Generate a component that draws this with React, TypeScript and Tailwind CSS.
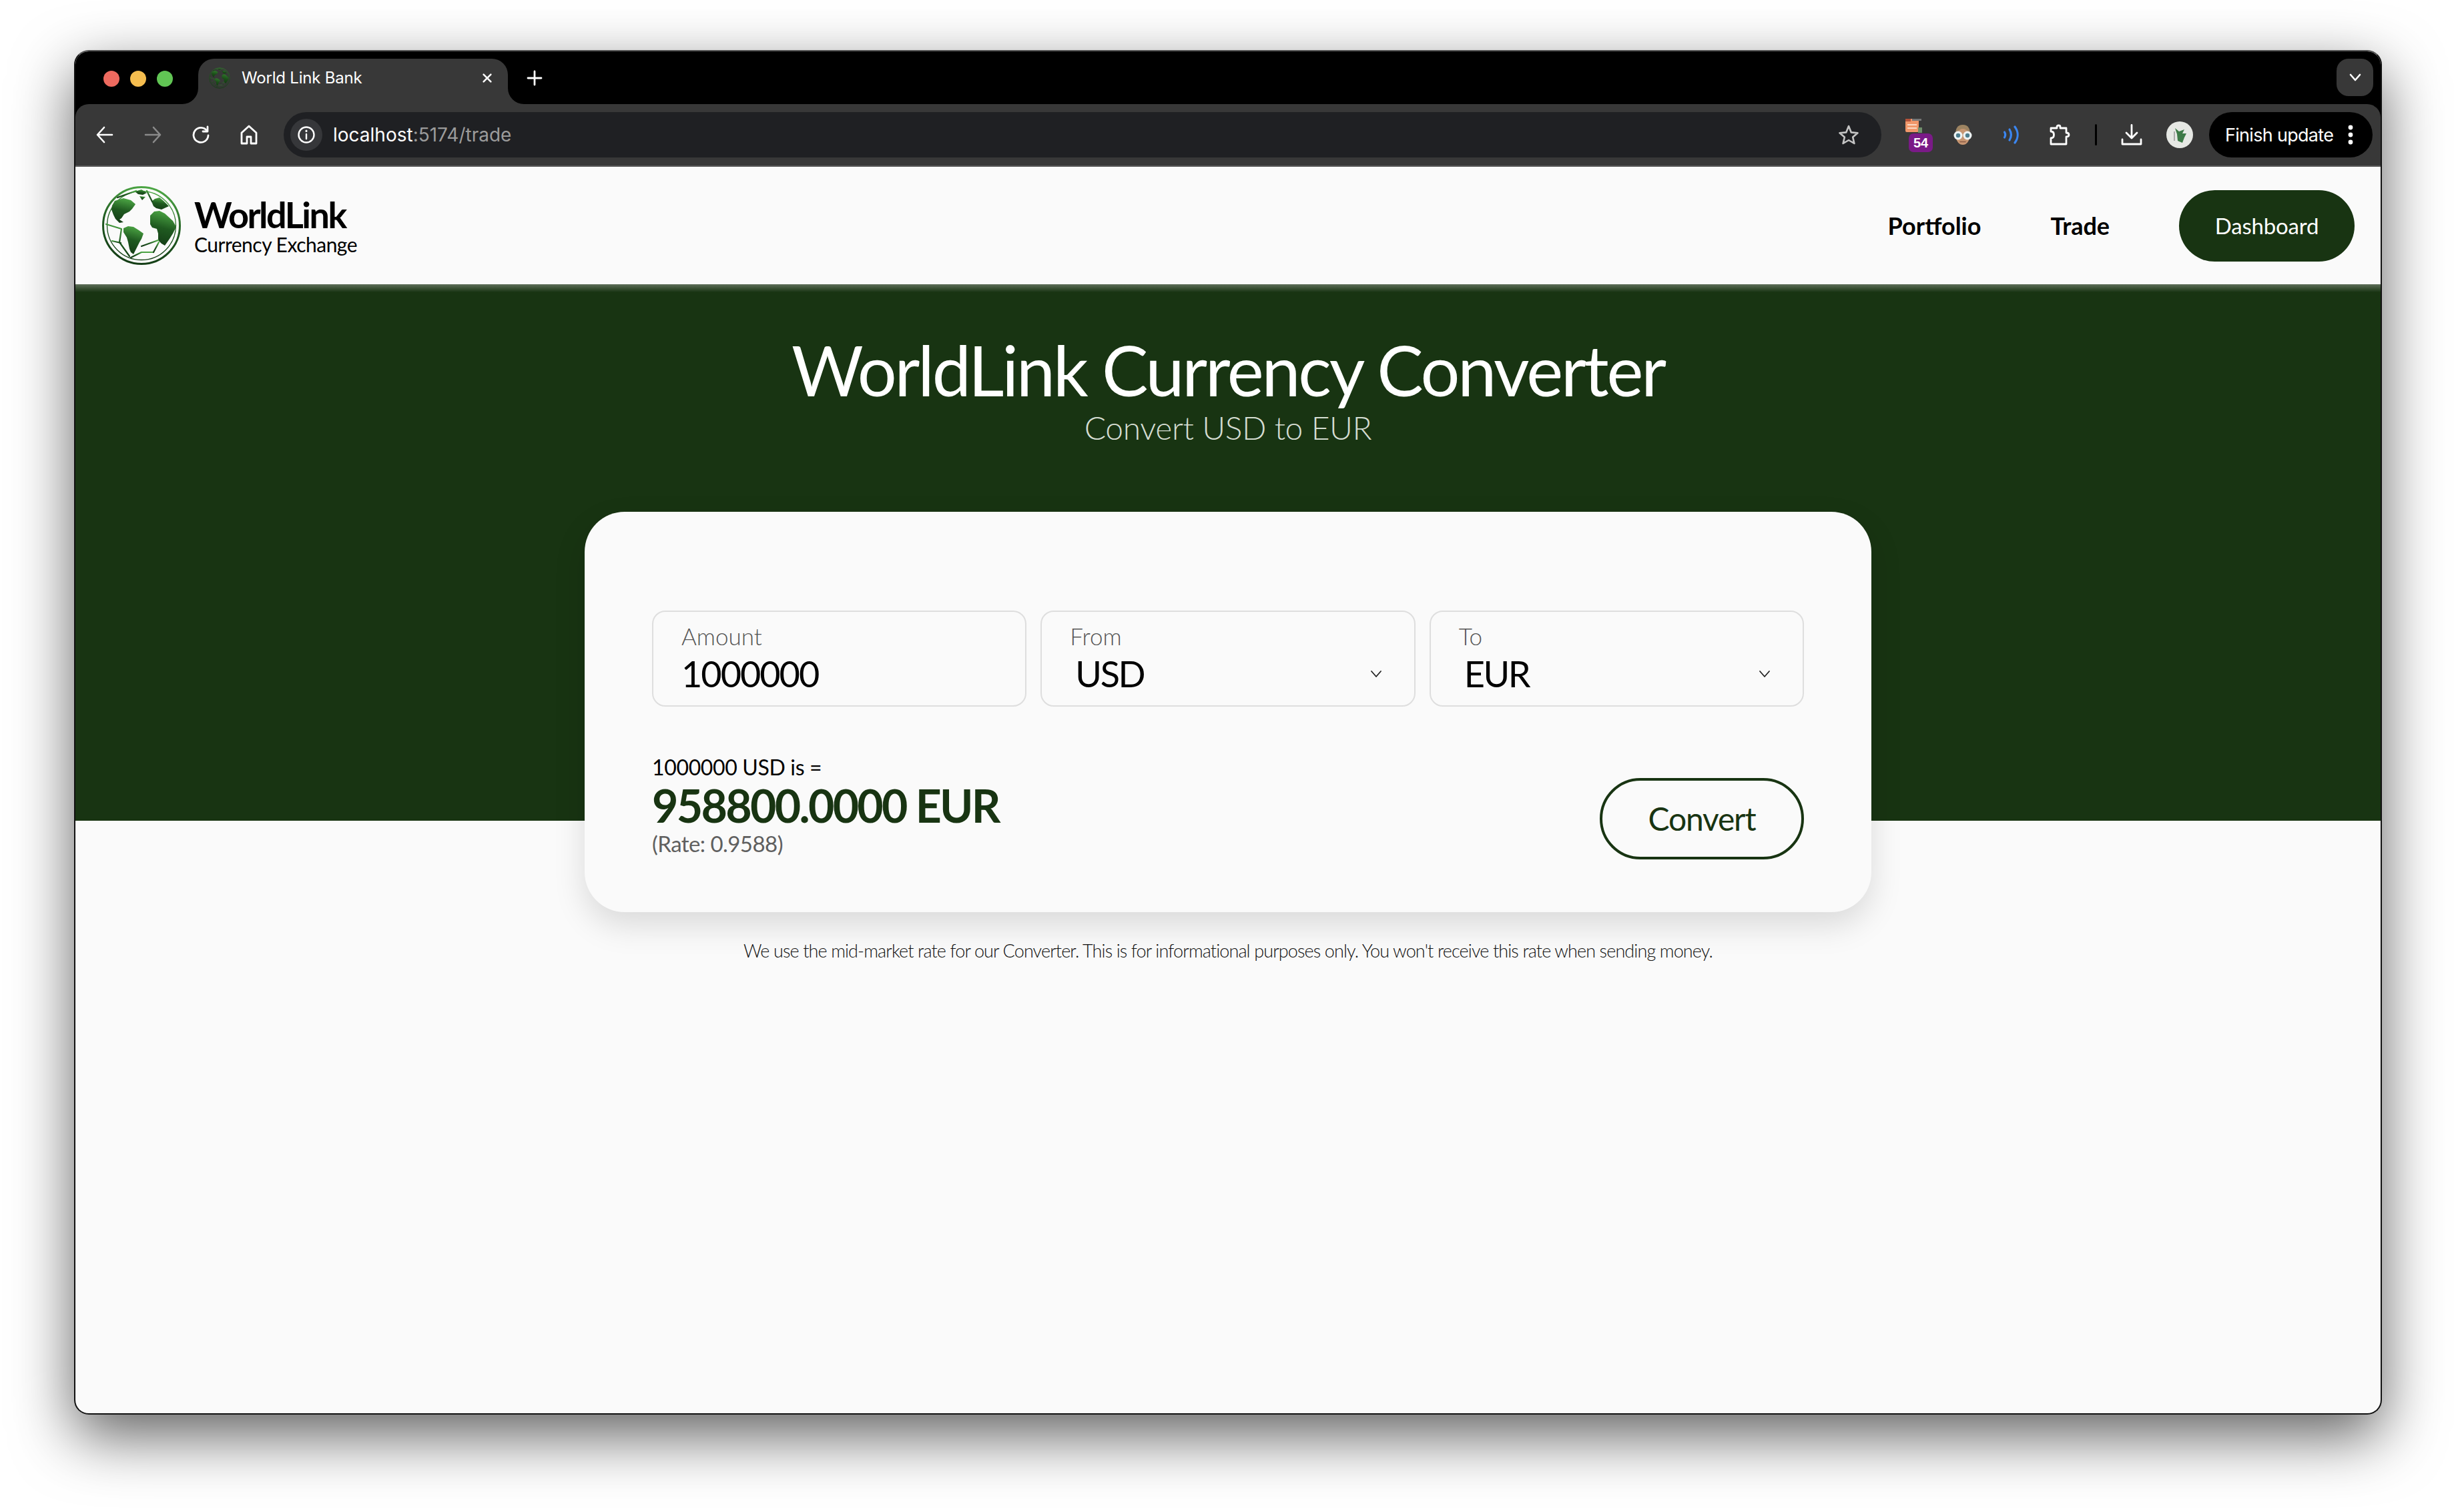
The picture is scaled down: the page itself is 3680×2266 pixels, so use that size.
import React from "react";

function Globe({ size, dim = false }: { size: number; dim?: boolean }) {
  const id = dim ? "gd" : "gl";
  return (
    <svg width={size} height={size} viewBox="0 0 120 120" fill="none">
      <defs>
        <linearGradient id={id} x1="0.6" y1="0" x2="0.4" y2="1">
          <stop offset="0" stopColor={dim ? "#2f7a2b" : "#4da745"} />
          <stop offset="0.5" stopColor={dim ? "#1c4f1a" : "#1f5a20"} />
          <stop offset="1" stopColor={dim ? "#123a12" : "#143d16"} />
        </linearGradient>
      </defs>
      <circle cx="60" cy="60" r="57.5" stroke={`url(#${id})`} strokeWidth="3" />
      <circle cx="60" cy="60" r="51.5" stroke={`url(#${id})`} strokeWidth="1.3" />
      <g fill={`url(#${id})`}>
        <path d="M20 23 L33 19 L44 22 L51 28 L46 35 L42 39 L34 43 L30 49 L27 51 L33 55 L27 56 L21 50 L18 44 L15 36 L16 30 Z" />
        <path d="M33 64 L40 61 L48 62 L56 67 L63 72 L60 80 L57 85 L52 95 L48 103 L44 100 L42 95 L40 85 L38 78 L33 70 Z" />
        <path d="M73 45 L79 39 L87 38 L95 42 L107 53 L112 62 L107 72 L102 80 L95 90 L90 87 L85 82 L85 72 L83 65 L76 63 L73 58 Z" />
        <path d="M75 24 L80 20 L87 18 L93 23 L101 31 L90 36 L82 34 L78 31 Z" />
        <path d="M50 9 L60 6 L68 11 L62 14 L55 13 Z" />
        <path d="M57 16 L66 17 L61 22 Z" />
      </g>
      <g stroke={`url(#${id})`} strokeWidth="2.2" strokeLinecap="round" strokeLinejoin="round">
        <path d="M58 26 V61" />
        <path d="M42 42 H72" />
        <path d="M58 90 V116" />
        <path d="M60 91 L85 82" />
        <path d="M44 108 L60 100 L78 100" />
        <path d="M7 58 L30 65 L27 85 L42 106" />
        <path d="M16 83 L29 86" />
        <path d="M78 100 L86 85" />
        <path d="M24 18 L52 8" />
        <path d="M68 8 L76 24" />
      </g>
    </svg>
  );
}

function Corner({ side }: { side: "l" | "r" }) {
  return (
    <svg
      width="24"
      height="24"
      viewBox="0 0 24 24"
      className={side === "l" ? "absolute bottom-0 -left-[24px]" : "absolute bottom-0 -right-[24px]"}
    >
      <path d={side === "l" ? "M24 0 V24 H0 A24 24 0 0 0 24 0 Z" : "M0 0 V24 H24 A24 24 0 0 1 0 0 Z"} fill="#383838" />
    </svg>
  );
}

function TabStrip() {
  return (
    <div className="h-[79px] shrink-0 bg-black flex items-end relative pl-[42px]">
      <div className="flex gap-[16px] h-[24px] self-start mt-[29px]">
        <span className="w-[24px] h-[24px] rounded-full bg-[#ee6a5f]" />
        <span className="w-[24px] h-[24px] rounded-full bg-[#f5bd4f]" />
        <span className="w-[24px] h-[24px] rounded-full bg-[#61c554]" />
      </div>
      <div className="relative ml-[38px] w-[464px] h-[68px] bg-[#383838] rounded-t-[24px] flex items-center pl-[16px] pr-[22px] pb-[10px]">
        <Corner side="l" />
        <Corner side="r" />
        <Globe size={32} dim />
        <span className="ml-[17px] text-[24px] text-white font-['Inter',sans-serif] leading-none tracking-[-0.2px]">World Link Bank</span>
        <svg className="ml-auto" width="18" height="18" viewBox="0 0 20 20" fill="none" stroke="#fff" strokeWidth="2.8" strokeLinecap="round">
          <path d="M4 4 L16 16 M16 4 L4 16" />
        </svg>
      </div>
      <svg className="ml-[28px] mb-[27px]" width="24" height="24" viewBox="0 0 24 24" fill="none" stroke="#fff" strokeWidth="2.8" strokeLinecap="round">
        <path d="M12 2 V22 M2 12 H22" />
      </svg>
      <div className="ml-auto mr-[11px] mb-[12px] w-[55px] h-[56px] rounded-[18px] bg-[#383838] flex items-center justify-center">
        <svg width="18" height="12" viewBox="0 0 18 12" fill="none" stroke="#fff" strokeWidth="2.6" strokeLinecap="round" strokeLinejoin="round">
          <path d="M2 2 L9 10 L16 2" />
        </svg>
      </div>
    </div>
  );
}

function Toolbar() {
  return (
    <div className="shrink-0 bg-black">
      <div className="h-[92px] bg-[#383838] rounded-t-[20px] flex items-center pl-[30px] pr-[11px] relative">
        <svg width="28" height="28" viewBox="0 0 28 28" fill="none" stroke="#fff" strokeWidth="2.6" strokeLinecap="round" strokeLinejoin="round">
          <path d="M25 14 H3 M13 3 L3 14 L13 25" />
        </svg>
        <svg className="ml-[44px]" width="28" height="28" viewBox="0 0 28 28" fill="none" stroke="#8a8a8a" strokeWidth="2.6" strokeLinecap="round" strokeLinejoin="round">
          <path d="M3 14 H25 M15 3 L25 14 L15 25" />
        </svg>
        <svg className="ml-[44px]" width="28" height="28" viewBox="0 0 28 28" fill="none" stroke="#fff" strokeWidth="2.8" strokeLinecap="round" strokeLinejoin="round">
          <path d="M23 8 A11 11 0 1 0 25 15" />
          <path d="M24 2 V9 H17" />
        </svg>
        <svg className="ml-[44px]" width="28" height="30" viewBox="0 0 28 30" fill="none" stroke="#fff" strokeWidth="2.8" strokeLinejoin="round">
          <path d="M14 2 L3 12 V28 H11 V18 H17 V28 H25 V12 Z" />
        </svg>
        <div className="ml-[38px] w-[2394px] h-[68px] rounded-full bg-[#1f2023] flex items-center pl-[10px] pr-[33px]">
          <div className="w-[48px] h-[48px] rounded-full bg-[#36373a] flex items-center justify-center">
            <svg width="28" height="28" viewBox="0 0 28 28" fill="none" stroke="#fff" strokeWidth="2.4" strokeLinecap="round">
              <circle cx="14" cy="14" r="11.5" />
              <path d="M14 13 V20" />
              <path d="M14 8 V8.6" strokeWidth="3" />
            </svg>
          </div>
          <span className="ml-[16px] text-[28px] leading-none font-['Inter',sans-serif] text-white">
            localhost<span className="text-[#9b9b9b]">:5174/trade</span>
          </span>
          <svg className="ml-auto" width="32" height="32" viewBox="0 0 32 32" fill="none" stroke="#c4c4c4" strokeWidth="2.6" strokeLinejoin="round">
            <path d="M16 3 L19.8 12.4 L29.5 13.2 L22.2 19.6 L24.4 29 L16 24 L7.6 29 L9.8 19.6 L2.5 13.2 L12.2 12.4 Z" />
          </svg>
        </div>
        <div className="relative ml-[34px] w-[36px] h-[36px] -mt-[16px]">
          <svg width="28" height="28" viewBox="0 0 28 28">
            <rect x="2" y="2" width="20" height="20" rx="2" fill="#f0976a" />
            <rect x="2" y="2" width="8" height="4" fill="#b5533a" />
            <rect x="12" y="2" width="14" height="3" fill="#777" />
            <rect x="5" y="10" width="14" height="2" fill="#fbd9c5" />
            <rect x="5" y="15" width="14" height="2" fill="#fbd9c5" />
            <rect x="21" y="15" width="6" height="8" fill="#6f8f6b" />
          </svg>
          <span className="absolute left-[7px] top-[24px] w-[36px] h-[28px] rounded-[7px] bg-[#7a1a87] text-white text-[20px] font-bold font-['Liberation_Sans',sans-serif] flex items-center justify-center leading-none">54</span>
        </div>
        <svg className="ml-[37px]" width="30" height="30" viewBox="0 0 30 30">
          <path d="M15 0 C7 0 4 6 4 14 V20 H26 V14 C26 6 23 0 15 0 Z" fill="#9d8462" />
          <ellipse cx="15" cy="18" rx="10" ry="12" fill="#c79672" />
          <circle cx="8" cy="16" r="6.5" fill="#eef3f4" />
          <circle cx="22" cy="16" r="6.5" fill="#eef3f4" />
          <circle cx="8" cy="16" r="3.2" fill="#4d7e8e" />
          <circle cx="22" cy="16" r="3.2" fill="#4d7e8e" />
          <path d="M11 25.5 H19" stroke="#8a5a44" strokeWidth="1.6" strokeLinecap="round" />
        </svg>
        <svg className="ml-[45px]" width="26" height="28" viewBox="0 0 26 28" fill="none" stroke="#3b86f0" strokeWidth="3.2" strokeLinecap="round">
          <path d="M2.5 10 C4 12.5 4 15.5 2.5 18" />
          <path d="M10 6 C13 11 13 17 10 22" />
          <path d="M18 2 C23.5 9.5 23.5 18.5 18 26" />
        </svg>
        <svg className="ml-[43px]" width="32" height="32" viewBox="0 0 32 32" fill="none" stroke="#fff" strokeWidth="2.8" strokeLinejoin="round">
          <path d="M3 6 H12 V4 Q12 2 14.5 2 Q17 2 17 4 V6 H26 V13 Q30 13 30 16 Q30 19 26 19 V30 H3 V21 Q7.5 21 7.5 16 Q7.5 11 3 11 Z" />
        </svg>
        <div className="ml-[37px] w-[3px] h-[32px] bg-black rounded-full" />
        <svg className="ml-[36px]" width="32" height="32" viewBox="0 0 32 32" fill="none" stroke="#fff" strokeWidth="2.8" strokeLinecap="round" strokeLinejoin="round">
          <path d="M16 1.5 V21 M8 13 L16 21 L24 13" />
          <path d="M2 23 V30 H30 V23" />
        </svg>
        <div className="ml-[36px] w-[40px] h-[40px] rounded-full bg-[#e6e8e4] flex items-center justify-center">
          <svg width="26" height="26" viewBox="0 0 26 26">
            <path d="M6 3 L12 8 L20 5 L17 11 L23 11 L20 17 L17 25 L10 22 L9 12 Z" fill="#3d7a47" />
            <path d="M5 8 V22" stroke="#aaa" strokeWidth="2" />
          </svg>
        </div>
        <div className="ml-[24px] w-[245px] h-[68px] rounded-full bg-black flex items-center pl-[24px]">
          <span className="text-[27px] leading-none font-['Inter',sans-serif] text-white tracking-[-0.7px]">Finish update</span>
          <svg className="ml-[22px]" width="8" height="30" viewBox="0 0 8 30" fill="#fff">
            <circle cx="4" cy="4" r="3.4" />
            <circle cx="4" cy="15" r="3.4" />
            <circle cx="4" cy="26" r="3.4" />
          </svg>
        </div>
      </div>
    </div>
  );
}

function Nav() {
  return (
    <div className="h-[176px] shrink-0 bg-[#fafafa] flex items-center pl-[39px] pr-[39px] font-['Lato',sans-serif] text-black">
      <Globe size={120} />
      <div className="ml-[19px] flex flex-col -mt-[4px]">
        <span className="text-[54px] font-bold leading-[62px] tracking-[-2.5px]">WorldLink</span>
        <span className="text-[30px] leading-[30px] -mt-[2px] tracking-[-0.5px]">Currency Exchange</span>
      </div>
      <a className="ml-auto text-[36px] font-bold leading-none tracking-[0px]">Portfolio</a>
      <a className="ml-[104px] text-[36px] font-bold leading-none tracking-[-0.1px]">Trade</a>
      <a className="ml-[104px] w-[263px] h-[107px] rounded-full bg-[#183412] text-white text-[33px] leading-none tracking-[-0.2px] flex items-center justify-center">Dashboard</a>
    </div>
  );
}

function Hero() {
  return (
    <div className="h-[804px] shrink-0 bg-[#183412] relative flex flex-col items-center font-['Lato',sans-serif] pt-[66px]">
      <div className="absolute top-0 left-0 right-0 h-[12px] bg-gradient-to-b from-[#5f6f5a] to-[#183412]" />
      <h1 className="text-[104px] leading-[124px] text-white font-normal tracking-[-3.15px]">WorldLink Currency Converter</h1>
      <p className="text-[48px] leading-[60px] -mt-[5px] font-light text-[#d5ddd2] tracking-[-0.4px]">Convert USD to EUR</p>
    </div>
  );
}

function Field({ label, value, select }: { label: string; value: string; select?: boolean }) {
  return (
    <div className="h-[144px] rounded-[20px] border-2 border-[#dedede] relative pl-[42px] pt-[13px]">
      <div className="text-[35px] leading-[46px] font-light text-[#555]">{label}</div>
      <div className={select ? "mt-[3px] text-[54px] leading-[62px] text-black pl-[8px] tracking-[-2.4px]" : "mt-[3px] text-[54px] leading-[62px] text-black tracking-[-2px]"}>{value}</div>
      {select && (
        <svg className="absolute right-[48px] top-[86px]" width="18" height="14" viewBox="0 0 18 14" fill="none" stroke="#222" strokeWidth="1.8" strokeLinecap="round" strokeLinejoin="round">
          <path d="M2 3 L9 11 L16 3" />
        </svg>
      )}
    </div>
  );
}

function Converter() {
  return (
    <div className="flex-1 -mt-[463px] relative flex flex-col items-center font-['Lato',sans-serif]">
      <div className="w-[1928px] h-[600px] rounded-[60px] bg-[#fafafa] shadow-[0_20px_48px_rgba(0,0,0,0.13)] px-[101px] pt-[148px]">
        <div className="grid grid-cols-3 gap-[21px]">
          <Field label="Amount" value="1000000" />
          <Field label="From" value="USD" select />
          <Field label="To" value="EUR" select />
        </div>
        <div className="flex items-end justify-between mt-[107px]">
          <div className="flex flex-col mb-[4px]">
            <span className="text-[32px] leading-[40px] text-black tracking-[-0.35px] -mt-[38px]">1000000 USD is =</span>
            <span className="text-[68px] leading-[74px] font-bold text-[#183412] tracking-[-2.7px]">958800.0000 EUR</span>
            <span className="text-[33px] leading-[40px] text-[#5f5f5f] tracking-[-0.55px]">(Rate: 0.9588)</span>
          </div>
          <button className="w-[306px] h-[122px] rounded-full border-4 border-[#183412] text-[#183412] text-[48px] leading-none tracking-[-1.2px] bg-[#fafafa]">Convert</button>
        </div>
      </div>
      <p className="mt-[41px] text-[27px] leading-[34px] font-light text-[#111] tracking-[-0.88px]">
        We use the mid-market rate for our Converter. This is for informational purposes only. You won't receive this rate when sending money.
      </p>
    </div>
  );
}

export default function App() {
  return (
    <div className="w-[3680px] h-[2266px] bg-white pt-[75px] pl-[111px]">
      <div className="w-[3458px] h-[2045px] rounded-[22px] overflow-hidden border-2 border-[#111] border-t-[#555] bg-[#fafafa] flex flex-col shadow-[0_32px_90px_rgba(0,0,0,0.62)]">
        <TabStrip />
        <Toolbar />
        <div className="h-[2px] shrink-0 bg-[#5c5c5c]" />
        <Nav />
        <Hero />
        <Converter />
      </div>
    </div>
  );
}
